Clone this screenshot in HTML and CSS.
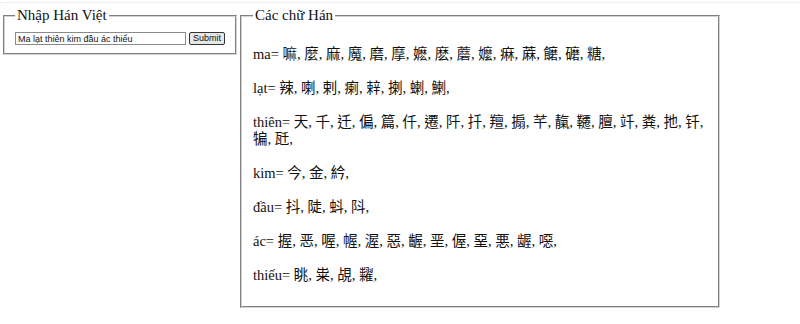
FILE: index.html
```html
<!DOCTYPE html>
<html lang="vi">
<head>
  <meta charset="UTF-8" />
  <title>Tra chữ Hán</title>
  <link rel="stylesheet" href="styles.css">
</head>
<body>
  <div class="page">
    <!-- Input box -->
    <fieldset class="box box-input">
      <legend>Nhập Hán Việt</legend>
      <form class="search" onsubmit="return false;">
        <input type="text" class="search-text" value="Ma lạt thiên kim đầu ác thiểu">
        <button type="submit" class="search-btn">Submit</button>
      </form>
    </fieldset>

    <!-- Results -->
    <fieldset class="box box-result">
      <legend>Các chữ Hán</legend>
      <p>ma= 嘛, 麼, 麻, 魔, 磨, 摩, 嬷, 麽, 蘑, 嬤, 痳, 蔴, 饝, 礳, 糖,</p>
      <p>lạt= 辣, 喇, 剌, 瘌, 辢, 揦, 蝲, 鯻,</p>
      <p>thiên= 天, 千, 迁, 偏, 篇, 仟, 遷, 阡, 扦, 羶, 搧, 芊, 靝, 韆, 膻, 竏, 粪, 扡, 钎, 犏, 瓩,</p>
      <p>kim= 今, 金, 紟,</p>
      <p>đầu= 抖, 陡, 蚪, 阧,</p>
      <p>ác= 握, 恶, 喔, 幄, 渥, 惡, 齷, 垩, 偓, 堊, 悪, 龌, 噁,</p>
      <p>thiếu= 眺, 粜, 覘, 糶,</p>
    </fieldset>
  </div>
</body>
</html>
```

FILE: styles.css
```css
* {
  box-sizing: border-box;
}

body {
  margin: 0;
  background: #fff;
  color: #111;
  font-family: "Liberation Serif", "Noto Sans CJK TC", "Noto Sans CJK SC", serif;
  font-size: 14.5px;
}

.page {
  display: flex;
  align-items: flex-start;
  gap: 3px;
  margin-top: 2px;
  padding: 4px 0 0 3px;
  border-top: 1px dotted #e4e4e4;
}

.box {
  margin: 0;
  border: 2px groove #d4d4d4;
  padding: 0 11px;
}

.box legend {
  padding: 0 2px;
  line-height: 17px;
  font-size: 15px;
}

.box-input {
  width: 234px;
  padding: 8px 10px;
}

.search {
  display: flex;
  gap: 3px;
}

.search-text {
  width: 171px;
  height: 13px;
  margin: 0;
  padding: 0 2px;
  border: 1px solid #8a8a8a;
  font-family: "Liberation Sans", Arial, sans-serif;
  font-size: 9px;
  color: #111;
}

.search-btn {
  width: 36px;
  height: 13px;
  margin: 0;
  padding: 0;
  border: 1px solid #333;
  border-radius: 2px;
  background: #e6e6e6;
  font-family: "Liberation Sans", Arial, sans-serif;
  font-size: 9px;
  line-height: 11px;
  color: #111;
}

.box-result {
  width: 480px;
  padding-top: 5px;
  padding-bottom: 5px;
}

.box-result p {
  margin: 17px 0;
  line-height: 17px;
}
```
